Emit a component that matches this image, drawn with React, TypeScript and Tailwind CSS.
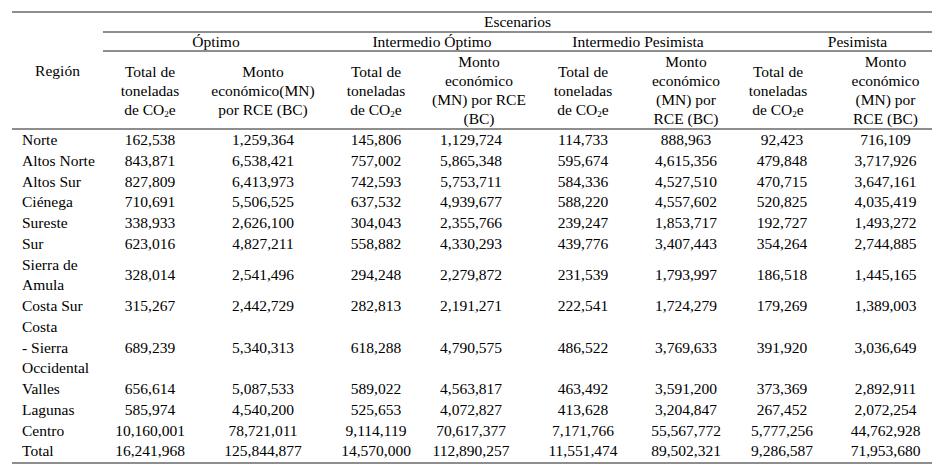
const rows: { region: React.ReactNode; lines: number; v: string[] }[] = [
  { region: 'Norte', lines: 1, v: ['162,538', '1,259,364', '145,806', '1,129,724', '114,733', '888,963', '92,423', '716,109'] },
  { region: 'Altos Norte', lines: 1, v: ['843,871', '6,538,421', '757,002', '5,865,348', '595,674', '4,615,356', '479,848', '3,717,926'] },
  { region: 'Altos Sur', lines: 1, v: ['827,809', '6,413,973', '742,593', '5,753,711', '584,336', '4,527,510', '470,715', '3,647,161'] },
  { region: 'Ciénega', lines: 1, v: ['710,691', '5,506,525', '637,532', '4,939,677', '588,220', '4,557,602', '520,825', '4,035,419'] },
  { region: 'Sureste', lines: 1, v: ['338,933', '2,626,100', '304,043', '2,355,766', '239,247', '1,853,717', '192,727', '1,493,272'] },
  { region: 'Sur', lines: 1, v: ['623,016', '4,827,211', '558,882', '4,330,293', '439,776', '3,407,443', '354,264', '2,744,885'] },
  { region: <>Sierra de<br />Amula</>, lines: 2, v: ['328,014', '2,541,496', '294,248', '2,279,872', '231,539', '1,793,997', '186,518', '1,445,165'] },
  { region: 'Costa Sur', lines: 1, v: ['315,267', '2,442,729', '282,813', '2,191,271', '222,541', '1,724,279', '179,269', '1,389,003'] },
  { region: <>Costa<br />- Sierra<br />Occidental</>, lines: 3, v: ['689,239', '5,340,313', '618,288', '4,790,575', '486,522', '3,769,633', '391,920', '3,036,649'] },
  { region: 'Valles', lines: 1, v: ['656,614', '5,087,533', '589,022', '4,563,817', '463,492', '3,591,200', '373,369', '2,892,911'] },
  { region: 'Lagunas', lines: 1, v: ['585,974', '4,540,200', '525,653', '4,072,827', '413,628', '3,204,847', '267,452', '2,072,254'] },
  { region: 'Centro', lines: 1, v: ['10,160,001', '78,721,011', '9,114,119', '70,617,377', '7,171,766', '55,567,772', '5,777,256', '44,762,928'] },
  { region: 'Total', lines: 1, v: ['16,241,968', '125,844,877', '14,570,000', '112,890,257', '11,551,474', '89,502,321', '9,286,587', '71,953,680'] },
];

// per-column tweak so the numbers sit where the original has them
const valPad = ['', '', '', 'pr-4', '', '', 'pl-2', 'pl-6'];

const Tot = () => (
  <>
    Total de<br />toneladas<br />de CO<sub className="text-[9px]">2</sub>e
  </>
);

export default function App() {
  const line = 'border-[#8e8e8e]';
  return (
    <div className="w-[945px] h-[473px] bg-white text-black font-['Liberation_Serif',serif] text-[15.5px]">
      <table className="ml-[12px] mt-[11px] w-[920px] table-fixed border-separate border-spacing-0">
        <colgroup>
          <col className="w-[91px]" />
          <col className="w-[94px]" />
          <col className="w-[132px]" />
          <col className="w-[94px]" />
          <col className="w-[112px]" />
          <col className="w-[96px]" />
          <col className="w-[110px]" />
          <col className="w-[74px]" />
          <col className="w-[117px]" />
        </colgroup>
        <thead>
          <tr>
            <th rowSpan={3} className={`border-t-2 border-b-2 ${line} font-normal align-middle text-center`}>
              Región
            </th>
            <th colSpan={8} className={`border-t-2 border-b-2 ${line} font-normal leading-[18px] text-center`}>
              Escenarios
            </th>
          </tr>
          <tr className="leading-[17px]">
            <th colSpan={2} className={`border-b-2 ${line} font-normal`}>Óptimo</th>
            <th colSpan={2} className={`border-b-2 ${line} font-normal`}>Intermedio Óptimo</th>
            <th colSpan={2} className={`border-b-2 ${line} font-normal`}>Intermedio Pesimista</th>
            <th colSpan={2} className={`border-b-2 ${line} font-normal pl-[42px]`}>Pesimista</th>
          </tr>
          <tr className="leading-[19px] h-[78px]">
            <th className={`border-b-2 ${line} font-normal align-middle`}><Tot /></th>
            <th className={`border-b-2 ${line} font-normal align-middle`}>
              Monto<br />económico(MN)<br />por RCE (BC)
            </th>
            <th className={`border-b-2 ${line} font-normal align-middle`}><Tot /></th>
            <th className={`border-b-2 ${line} font-normal align-middle`}>
              Monto<br />económico<br />(MN) por RCE<br />(BC)
            </th>
            <th className={`border-b-2 ${line} font-normal align-middle`}><Tot /></th>
            <th className={`border-b-2 ${line} font-normal align-middle`}>
              Monto<br />económico<br />(MN) por<br />RCE (BC)
            </th>
            <th className={`border-b-2 ${line} font-normal align-middle`}><Tot /></th>
            <th className={`border-b-2 ${line} font-normal align-middle pl-6`}>
              Monto<br />económico<br />(MN) por<br />RCE (BC)
            </th>
          </tr>
        </thead>
        <tbody className="leading-[20.75px]">
          {rows.map((r, i) => {
            const last = i === rows.length - 1;
            const b = last ? `border-b-2 ${line}` : '';
            return (
              <tr key={i}>
                <td className={`pl-[10px] text-left align-middle whitespace-nowrap ${b}`}>{r.region}</td>
                {r.v.map((n, j) => (
                  <td key={j} className={`text-center align-middle whitespace-nowrap ${valPad[j]} ${b}`}>
                    {n}
                  </td>
                ))}
              </tr>
            );
          })}
        </tbody>
      </table>
    </div>
  );
}
